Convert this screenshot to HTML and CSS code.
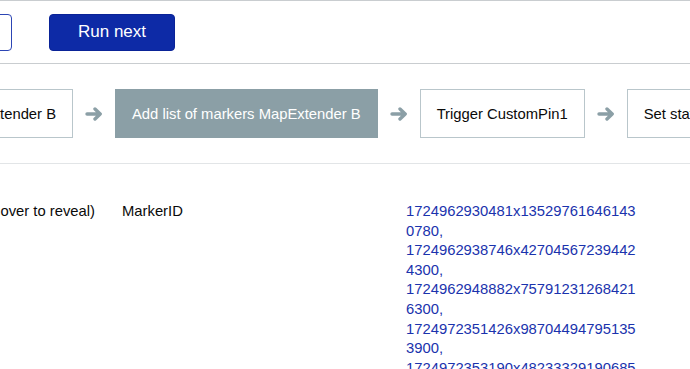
FILE: index.html
```html
<!DOCTYPE html>
<html lang="en">
<head>
<meta charset="utf-8">
<title>Run steps</title>
<link rel="stylesheet" href="styles.css">
</head>
<body>
<div class="page">
  <div class="toolbar">
    <button class="btn btn-outline">Run all</button>
    <button class="btn btn-primary">Run next</button>
  </div>

  <div class="steps">
    <div class="clip-left">
      <div class="step">Create MapExtender B</div>
    </div>
    <svg class="arrow" viewBox="0 0 18 14" width="18" height="14" aria-hidden="true"><path d="M2 7 H15.2 M10 2 L15.2 7 L10 12"/></svg>
    <div class="step step-active">Add list of markers MapExtender B</div>
    <svg class="arrow" viewBox="0 0 18 14" width="18" height="14" aria-hidden="true"><path d="M2 7 H15.2 M10 2 L15.2 7 L10 12"/></svg>
    <div class="step">Trigger CustomPin1</div>
    <svg class="arrow" viewBox="0 0 18 14" width="18" height="14" aria-hidden="true"><path d="M2 7 H15.2 M10 2 L15.2 7 L10 12"/></svg>
    <div class="step">Set state MapExtender B</div>
  </div>

  <div class="details">
    <div class="clip-left col-label">
      <span class="nowrap">Value (hover to reveal)</span>
    </div>
    <div class="col-key">MarkerID</div>
    <div class="col-value">1724962930481x135297616461430780, 1724962938746x427045672394424300, 1724962948882x757912312684216300, 1724972351426x987044947951353900, 1724972353190x482333291906850000</div>
  </div>
</div>
</body>
</html>
```

FILE: styles.css
```css
html, body {
  margin: 0;
  padding: 0;
  background: #ffffff;
}

.page {
  width: 690px;
  height: 369px;
  overflow: hidden;
  font-family: "Liberation Sans", Arial, sans-serif;
  color: #111111;
}

.toolbar {
  display: flex;
  align-items: center;
  gap: 37px;
  border-top: 1px solid #c9cdd0;
  border-bottom: 1px solid #c9cdd0;
  box-sizing: border-box;
  height: 64px;
}

.btn {
  height: 37px;
  border-radius: 4px;
  font-family: "Liberation Sans", Arial, sans-serif;
  font-size: 17px;
  padding: 0;
  box-sizing: border-box;
  flex-shrink: 0;
}

.btn-outline {
  width: 100px;
  margin-left: -88px;
  background: #ffffff;
  border: 1.5px solid #2c45b4;
  color: #0d2aa6;
}

.btn-primary {
  width: 126px;
  background: #0d2aa6;
  border: 1px solid #0a2397;
  color: #ffffff;
}

.steps {
  display: flex;
  align-items: center;
  border-bottom: 1px solid #e2e5e7;
  box-sizing: border-box;
  height: 100px;
}

.clip-left {
  display: flex;
  justify-content: flex-end;
  flex-shrink: 0;
}

.steps > .clip-left {
  width: 73px;
}

.step {
  flex-shrink: 0;
  display: flex;
  align-items: center;
  height: 49px;
  box-sizing: border-box;
  padding: 0 16px;
  border: 1px solid #b9c6cb;
  background: #ffffff;
  font-size: 14.8px;
  white-space: nowrap;
  color: #0a0a0a;
}

.step-active {
  background: #8b9fa6;
  border-color: #8b9fa6;
  color: #ffffff;
}

.arrow {
  flex-shrink: 0;
  margin: 0 12px;
  fill: none;
  stroke: #8b9fa6;
  stroke-width: 3.4;
  stroke-linecap: round;
  stroke-linejoin: round;
}

.details {
  display: flex;
  align-items: flex-start;
  padding-top: 38px;
  font-size: 14.8px;
  line-height: 19.6px;
  color: #0a0a0a;
}

.col-label {
  width: 95px;
}

.nowrap {
  white-space: nowrap;
}

.col-key {
  width: 284px;
  margin-left: 27px;
  flex-shrink: 0;
}

.col-value {
  width: 233px;
  flex-shrink: 0;
  color: #1a33ad;
  overflow-wrap: anywhere;
}
```
